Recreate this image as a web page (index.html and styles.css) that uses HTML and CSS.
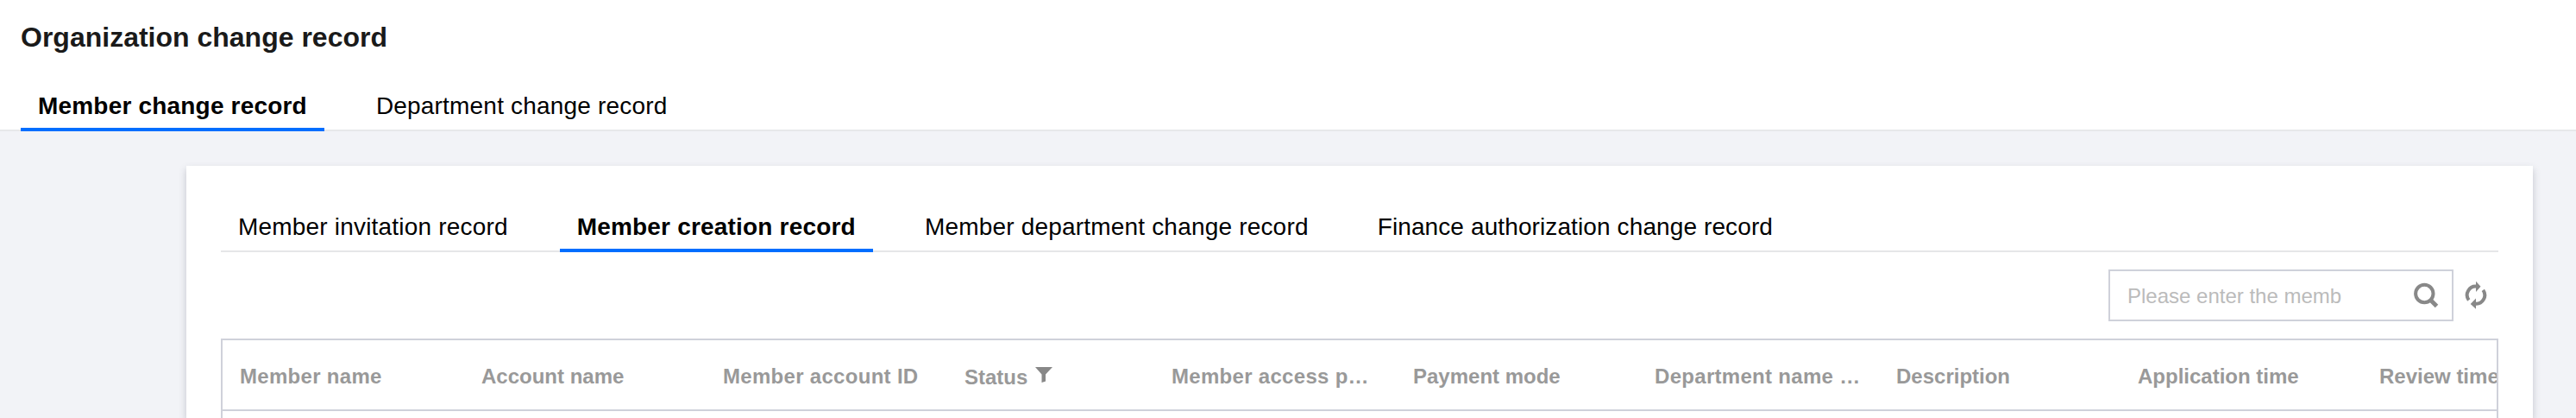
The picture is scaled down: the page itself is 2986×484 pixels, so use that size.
FILE: index.html
```html
<!DOCTYPE html>
<html lang="en">
<head>
  <meta charset="UTF-8">
  <title>Organization change record</title>
  <link rel="stylesheet" href="styles.css">
</head>
<body>

  <header class="page-header">
    <h1>Organization change record</h1>
    <nav class="tabs">
      <a class="tab active">Member change record</a>
      <a class="tab">Department change record</a>
    </nav>
  </header>

  <main class="card">
    <nav class="tabs inner-tabs">
      <a class="tab">Member invitation record</a>
      <a class="tab active">Member creation record</a>
      <a class="tab">Member department change record</a>
      <a class="tab finance">Finance authorization change record</a>
    </nav>

    <div class="toolbar">
      <div class="search">
        <span class="placeholder">Please enter the memb</span>
        <svg class="search-icon" width="30" height="30" viewBox="0 0 30 30">
          <circle cx="12.300" cy="13" r="10.200" fill="none" stroke="#888" stroke-width="4"/>
          <path d="M19 20l7.500 7.500" stroke="#888" stroke-width="5"/>
        </svg>
      </div>
      <svg class="refresh-icon" width="26" height="34" viewBox="0 0 26 34">
        <path d="M4.700 22.500A10 10 0 0 1 14 6.700M21.300 10.900A10 10 0 0 1 12 26.700" fill="none" stroke="#888" stroke-width="4"/>
        <path d="M13 .7l5.500 6L13 13zM13 20.500v12.200L6.700 27z" fill="#888"/>
      </svg>
    </div>

    <div class="table">
      <div class="row head">
        <div class="cell wide">Member name</div>
        <div class="cell">Account name</div>
        <div class="cell wide">Member account ID</div>
        <div class="cell status">Status
          <svg class="filter-icon" width="20" height="18" viewBox="0 0 20 18"><path d="M0 0h20l-8 8.500v8L7.500 18V8.500z" fill="#888"/></svg>
        </div>
        <div class="cell wide">Member access p…</div>
        <div class="cell">Payment mode</div>
        <div class="cell wide">Department name …</div>
        <div class="cell">Description</div>
        <div class="cell">Application time</div>
        <div class="cell">Review time</div>
      </div>
    </div>
  </main>

</body>
</html>
```

FILE: styles.css
```css
* {
  box-sizing: border-box;
}

body {
  margin: 0;
  height: 484px;
  overflow: hidden;
  background: #f2f3f7;
  color: #000;
  font-family: "Liberation Sans", Arial, sans-serif;
  font-size: 24px;
}

.page-header {
  height: 152px;
  padding: 0 24px;
  background: #fff;
  border-bottom: 2px solid #e7e8ea;
}

h1 {
  margin: 0;
  height: 96px;
  padding-top: 25px;
  font-size: 32px;
  line-height: 37px;
  color: #1a1a1a;
}

.tabs {
  display: flex;
  gap: 40px;
  height: 56px;
  font-size: 28px;
  letter-spacing: 0.19px;
  white-space: nowrap;
}

.tab {
  height: 56px;
  padding: 11px 20px 0;
  line-height: 32px;
}

.tab.active {
  font-weight: bold;
  border-bottom: 4px solid #006eff;
}

.tab.finance {
  letter-spacing: 0.11px;
}

.card {
  width: 2720px;
  height: 292px;
  margin: 40px 0 0 216px;
  padding: 44px 40px 0;
  background: #fff;
  box-shadow: 0 4px 8px rgba(54, 58, 80, 0.25);
}

.inner-tabs {
  border-bottom: 2px solid #e5e6e8;
}

.toolbar {
  display: flex;
  justify-content: flex-end;
  margin-top: 20px;
  padding-right: 13px;
}

.search {
  display: flex;
  align-items: center;
  justify-content: space-between;
  width: 400px;
  height: 60px;
  padding: 0 14px 0 20px;
  border: 2px solid #cfd1da;
}

.placeholder {
  padding-top: 2px;
  color: #bbb;
}

.refresh-icon {
  margin: 13px 0 0 13px;
}

.table {
  height: 92px;
  margin-top: 20px;
  border: 2px solid #cfd1da;
  border-bottom: 0;
  overflow: hidden;
}

.row {
  display: flex;
  height: 82px;
  border-bottom: 2px solid #cfd1da;
}

.cell {
  flex: none;
  width: 280px;
  height: 80px;
  padding: 1px 20px 0;
  line-height: 82px;
  font-weight: bold;
  color: #999;
  white-space: nowrap;
}

.cell.wide {
  letter-spacing: 0.3px;
}

.status {
  display: flex;
  width: 240px;
  padding-top: 2px;
}

.filter-icon {
  margin: 29px 0 0 9px;
}
```
